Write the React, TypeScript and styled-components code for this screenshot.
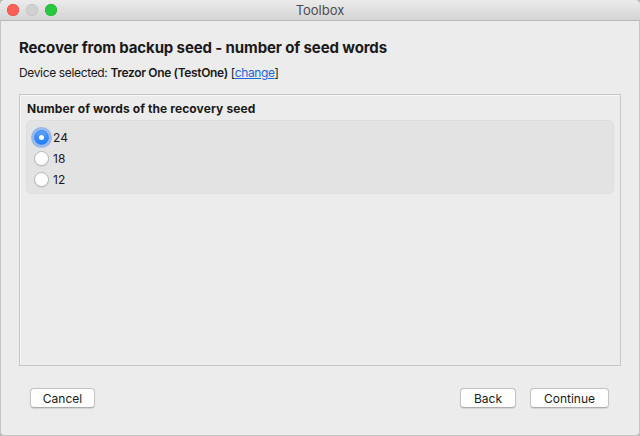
import React from "react";
import styled, { createGlobalStyle } from "styled-components";

const Global = createGlobalStyle`
  html, body { margin: 0; padding: 0; background: #b8b8b8; }
  body { font-family: Inter, "Noto Sans", sans-serif; }
  * { box-sizing: border-box; }
`;

const Window = styled.div`
  width: 640px;
  height: 436px;
  background: #ececec;
  border-radius: 5px;
  overflow: hidden;
  display: flex;
  flex-direction: column;
  box-shadow: inset 0 0 0 1px #c4c4c4;
`;

const TitleBar = styled.div`
  height: 21px;
  flex: 0 0 21px;
  position: relative;
  display: flex;
  align-items: center;
  justify-content: center;
  background: linear-gradient(#ebebeb, #d5d5d5);
  border-bottom: 1px solid #b9b9b9;
  font-size: 13px;
  color: #4d4d4d;
`;

const Lights = styled.div`
  position: absolute;
  left: 7px;
  top: 4px;
  display: flex;
  gap: 7px;
`;

const Light = styled.span<{ $c: string; $b: string }>`
  width: 12px;
  height: 12px;
  border-radius: 50%;
  background: ${(p) => p.$c};
  box-shadow: inset 0 0 0 0.5px ${(p) => p.$b};
`;

const Body = styled.div`
  flex: 1;
  display: flex;
  flex-direction: column;
  padding: 17px 19px 0 19px;
`;

const Heading = styled.h1`
  margin: 0;
  font-size: 15px;
  font-weight: 700;
  color: #1a1a1a;
  line-height: 20px;
  letter-spacing: -0.12px;
`;

const Device = styled.div`
  margin-top: 7px;
  font-size: 12px;
  line-height: 16px;
  color: #1a1a1a;
  letter-spacing: -0.35px;
  b { font-weight: 600; }
  a { color: #1b66d6; text-decoration: underline; }
`;

const Group = styled.div`
  margin-top: 13px;
  height: 272px;
  width: 602px;
  border: 1px solid #c6c6c6;
  box-shadow: inset 1px 1px 0 #f7f7f7;
  padding: 6px 7px 0 7px;
  display: flex;
  flex-direction: column;
`;

const GroupTitle = styled.div`
  font-size: 12px;
  font-weight: 700;
  color: #1a1a1a;
  line-height: 16px;
  letter-spacing: 0.1px;
`;

const Options = styled.div`
  margin-top: 4px;
  height: 72px;
  width: 586px;
  background: #e3e3e3;
  border-radius: 4px;
  box-shadow: 0 0 0 1px #dedede;
  padding: 8px 0 0 7px;
  display: flex;
  flex-direction: column;
  gap: 5px;
`;

const Row = styled.label`
  display: flex;
  align-items: center;
  gap: 4px;
  height: 16px;
  font-size: 12px;
  color: #1a1a1a;
`;

const Radio = styled.span<{ $on?: boolean }>`
  width: 15px;
  height: 15px;
  border-radius: 50%;
  display: flex;
  align-items: center;
  justify-content: center;
  background: ${(p) => (p.$on ? "linear-gradient(#5aa2ff, #1f7bff)" : "#ffffff")};
  border: 1px solid ${(p) => (p.$on ? "#2d7df2" : "#b5b5b5")};
  box-shadow: ${(p) => (p.$on ? "0 0 0 3px rgba(90,150,240,0.55)" : "0 1px 1px rgba(0,0,0,0.08)")};
  &::after {
    content: "";
    width: 5px;
    height: 5px;
    border-radius: 50%;
    background: #fff;
    display: ${(p) => (p.$on ? "block" : "none")};
  }
`;

const Footer = styled.div`
  display: flex;
  align-items: center;
  padding: 22px 31px 0 30px;
`;

const Spacer = styled.div`
  flex: 1;
`;

const Button = styled.button<{ $w: number }>`
  width: ${(p) => p.$w}px;
  height: 20px;
  margin-left: 14px;
  &:first-child { margin-left: 0; }
  background: #ffffff;
  border: 1px solid #c3c3c3;
  border-bottom-color: #adadad;
  border-radius: 4px;
  font-family: Inter, "Noto Sans", sans-serif;
  font-size: 12px;
  color: #1a1a1a;
  padding: 0;
  box-shadow: 0 0.5px 1px rgba(0,0,0,0.1);
`;

const BottomGap = styled.div`
  height: 29px;
`;

export default function App() {
  return (
    <>
      <Global />
      <Window>
        <TitleBar>
          <Lights>
            <Light $c="#fe5f57" $b="#e0443e" />
            <Light $c="#d0d0d0" $b="#bdbdbd" />
            <Light $c="#28c940" $b="#1aab29" />
          </Lights>
          Toolbox
        </TitleBar>
        <Body>
          <Heading>Recover from backup seed - number of seed words</Heading>
          <Device>
            Device selected: <b>Trezor One (TestOne)</b> [<a>change</a>]
          </Device>
          <Group>
            <GroupTitle>Number of words of the recovery seed</GroupTitle>
            <Options>
              <Row><Radio $on />24</Row>
              <Row><Radio />18</Row>
              <Row><Radio />12</Row>
            </Options>
          </Group>
        </Body>
        <Footer>
          <Button $w={65}>Cancel</Button>
          <Spacer />
          <Button $w={56}>Back</Button>
          <Button $w={79}>Continue</Button>
        </Footer>
        <BottomGap />
      </Window>
    </>
  );
}
